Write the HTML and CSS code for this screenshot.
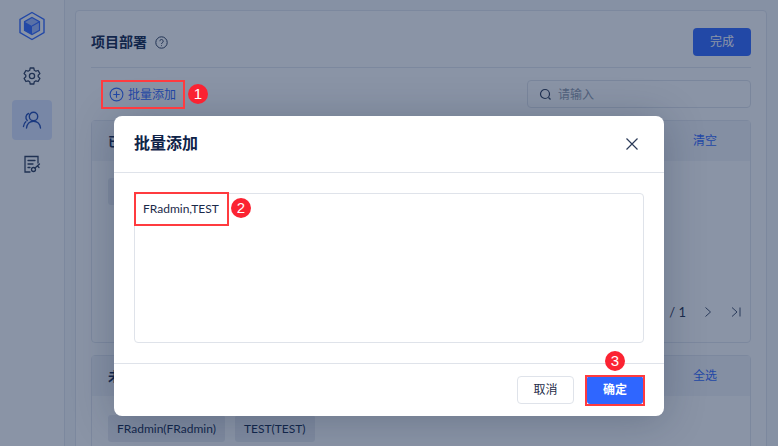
FILE: index.html
```html
<!DOCTYPE html>
<html lang="zh">
<head>
<meta charset="utf-8">
<title>项目部署</title>
<link rel="stylesheet" href="styles.css">
</head>
<body>
<div class="page">
  <aside class="sidebar">
    <div class="side-item">
      <svg width="32" height="32" viewBox="0 0 32 32" fill="none"><path d="M16 2.500 28 9.400v13.200L16 29.500 4 22.600V9.400z" stroke="#2f66ff" stroke-width="1.400"/><path d="M16 7.500 23.500 11.700v8.600L16 24.500 8.500 20.300v-8.600z" fill="#9db8ff" stroke="#2f66ff" stroke-width="1.200"/><path d="M8.500 11.700 16 15.900V24.500L8.500 20.300z" fill="#2f66ff"/><path d="M16 15.900 23.500 11.700" stroke="#2f66ff" stroke-width="1.200"/></svg>
    </div>
    <div class="side-item">
      <svg width="20" height="20" viewBox="0 0 20 20" fill="none" stroke="#2b3a58" stroke-width="1.300" stroke-linejoin="round"><path d="M8.200 2h3.600l.5 2.300 1.600.9 2.200-.7 1.800 3.100-1.700 1.600v1.600l1.700 1.600-1.800 3.100-2.200-.7-1.600.9-.5 2.300H8.200l-.5-2.300-1.600-.9-2.200.7-1.800-3.100 1.700-1.600V9.200L2.100 7.600l1.800-3.100 2.200.7 1.600-.9z"/><circle cx="10" cy="10" r="2.600"/></svg>
    </div>
    <div class="side-item side-active">
      <svg width="20" height="20" viewBox="0 0 20 20" fill="none" stroke="#1f48b0" stroke-width="1.400" stroke-linecap="round"><circle cx="11.500" cy="6.500" r="4.200"/><path d="M4.500 18c.4-4 3.300-6.800 7-6.800s6.600 2.800 7 6.800"/><path d="M6.500 3.500a4.200 4.200 0 0 0-1.300 6.900M1.500 16.500c.2-2 1-3.700 2.300-4.800"/></svg>
    </div>
    <div class="side-item">
      <svg width="20" height="20" viewBox="0 0 20 20" fill="none" stroke="#2b3a58" stroke-width="1.300" stroke-linecap="round"><path d="M8 18H3V2.500h13V9"/><path d="M6 6.500h7M6 10h5M6 13.500h2"/><circle cx="11.500" cy="15.500" r="2"/><path d="M13 14l4.500-4M15.500 12l1.500 1.500"/></svg>
    </div>
  </aside>
  <main class="main">
    <section class="card">
      <header class="card-head">
        <div class="card-title">
          <span>项目部署</span>
          <svg width="13" height="13" viewBox="0 0 13 13" fill="none" stroke="#2b3a58"><circle cx="6.500" cy="6.500" r="5.700"/><path d="M4.800 5.200a1.700 1.700 0 1 1 2.700 1.400c-.6.400-1 .7-1 1.400"/><path d="M6.500 9.300v.8"/></svg>
        </div>
        <button class="btn-done">完成</button>
      </header>
      <div class="tools">
        <div class="add-link">
          <svg width="15" height="15" viewBox="0 0 15 15" fill="none" stroke="#2f66ff" stroke-width="1.100"><circle cx="7.500" cy="7.500" r="6.400"/><path d="M4.300 7.500h6.400M7.500 4.300v6.400"/></svg>
          <span>批量添加</span>
        </div>
        <div class="search">
          <svg width="13" height="13" viewBox="0 0 13 13" fill="none" stroke="#2b3a58" stroke-width="1.200"><circle cx="6" cy="6" r="4.500"/><path d="m9.500 9.500 2 2"/></svg>
          <span>请输入</span>
        </div>
      </div>
      <div class="panel panel-top">
        <div class="panel-head"><b>已选</b><span class="panel-link">清空</span></div>
        <div class="panel-body">
          <div class="tags"><span class="tag tag-empty"></span></div>
          <div class="pager">
            <span class="pager-box"></span>
            <span>/ 1</span>
            <svg width="10" height="12" viewBox="0 0 10 12" fill="none" stroke="#3d4a66" class="pager-next"><path d="m2.500 1.500 5 4.500-5 4.500"/></svg>
            <svg width="12" height="12" viewBox="0 0 12 12" fill="none" stroke="#3d4a66" class="pager-last"><path d="m2 1.500 5 4.500-5 4.500M10 1.500v9"/></svg>
          </div>
        </div>
      </div>
      <div class="panel">
        <div class="panel-head"><b>未选</b><span class="panel-link">全选</span></div>
        <div class="panel-body">
          <div class="tags">
            <span class="tag">FRadmin(FRadmin)</span>
            <span class="tag">TEST(TEST)</span>
          </div>
        </div>
      </div>
    </section>
  </main>
</div>

<div class="overlay">
  <div class="dialog">
    <header class="dialog-head">
      <h2>批量添加</h2>
      <svg width="14" height="14" viewBox="0 0 14 14" fill="none" stroke="#2b3a58" stroke-width="1.200"><path d="m1.500 1.500 11 11M12.500 1.500l-11 11"/></svg>
    </header>
    <div class="dialog-body">
      <div class="input-area">FRadmin,TEST</div>
    </div>
    <footer class="dialog-foot">
      <button class="btn-cancel">取消</button>
      <button class="btn-ok">确定</button>
    </footer>
  </div>
</div>

<div class="mark mark-add"></div>
<div class="mark mark-input"></div>
<div class="mark mark-ok"></div>
<span class="badge badge-1">1</span>
<span class="badge badge-2">2</span>
<span class="badge badge-3">3</span>
</body>
</html>
```
FILE: styles.css
```css
* { box-sizing: border-box; }
html, body { margin: 0; height: 100%; overflow: hidden; }
body {
  position: relative;
  width: 778px;
  height: 446px;
  font-family: Lato, "Noto Sans CJK SC", sans-serif;
  font-size: 12px;
  line-height: 18px;
  color: #0f2348;
  background: #fff;
}
button { font: inherit; cursor: pointer; }
.page { display: flex; height: 446px; overflow: hidden; background: #f6f8fb; }
.sidebar {
  flex: 0 0 65px;
  background: #fff;
  border-right: 1px solid #e2e6ee;
  padding: 6px 12px 0;
  display: flex;
  flex-direction: column;
  gap: 4px;
}
.side-item { width: 40px; height: 40px; display: flex; align-items: center; justify-content: center; border-radius: 4px; }
.side-item:nth-child(2) { margin-top: 6px; }
.side-active { background: #dbe5ff; }
.main { flex: 1; padding: 10px 11px 0 10px; min-width: 0; }
.card {
  height: 480px;
  background: #fff;
  border: 1px solid #e2e6ee;
  border-radius: 4px;
  padding: 0 15px;
}
.card-head {
  height: 57px;
  display: flex;
  align-items: flex-end;
  justify-content: space-between;
  border-bottom: 1px solid #e2e6ee;
  padding-bottom: 11px;
}
.card-title { display: flex; align-items: center; gap: 8px; font-size: 14px; font-weight: 700; height: 28px; }
.btn-done { width: 58px; height: 28px; border: 0; border-radius: 4px; background: #2f66ff; color: #fff; }
.tools { display: flex; justify-content: space-between; padding: 12px 0 12px 10px; height: 52px; }
.add-link { display: flex; align-items: center; gap: 4px; height: 29px; padding-left: 8px; color: #2f66ff; }
.search {
  width: 224px;
  height: 28px;
  display: flex;
  align-items: center;
  gap: 6px;
  padding-left: 11px;
  border: 1px solid #dfe3ea;
  border-radius: 4px;
  color: #8e99ab;
}
.search span { margin-top: 2px; }
.panel { border: 1px solid #e2e6ee; border-radius: 4px; margin-bottom: 12px; }
.panel-top { height: 223px; }
.panel-head {
  height: 40px;
  display: flex;
  align-items: center;
  justify-content: space-between;
  padding: 0 33px 0 16px;
  background: #f2f4f8;
  font-size: 13px;
}
.panel-link { color: #2f66ff; font-size: 12px; }
.panel-body { position: relative; height: 180px; padding: 17px 16px; }
.panel-top .panel-body { display: flex; flex-direction: column; justify-content: space-between; padding: 17px 8px 16px 16px; }
.tags { display: flex; gap: 10px; }
.tag { height: 27px; padding: 0 9px; display: flex; align-items: center; background: #e8ebf1; border-radius: 3px; }
.panel:not(.panel-top) .panel-body { padding-top: 19px; }
.tag-empty { width: 96px; }
.pager { display: flex; align-items: center; justify-content: flex-end; height: 27px; font-size: 13px; color: #1f2c48; }
.pager-box { width: 36px; height: 27px; border: 1px solid #dfe3ea; border-radius: 3px; margin-right: 5px; }
.pager-next { margin-left: 17px; }
.pager-last { margin-left: 17px; }

.overlay {
  position: absolute;
  inset: 0;
  background: rgba(21, 41, 77, .5);
  padding: 116px 0 0 114px;
}
.dialog {
  width: 550px;
  height: 300px;
  background: #fff;
  border-radius: 8px;
  box-shadow: 0 4px 40px rgba(15, 30, 60, .25);
  display: flex;
  flex-direction: column;
}
.dialog-head {
  height: 57px;
  display: flex;
  align-items: center;
  justify-content: space-between;
  padding: 0 25px 0 20px;
  border-bottom: 1px solid #dfe3ea;
}
.dialog-head h2 { margin: 0 0 2px; font-size: 16px; line-height: 24px; font-weight: 700; color: #0f2348; }
.dialog-body { height: 191px; padding: 20px; border-bottom: 1px solid #dfe3ea; }
.input-area {
  height: 150px;
  padding: 6px 8px;
  border: 1px solid #dfe3ea;
  border-radius: 4px;
  color: #1b2a4a;
}
.dialog-foot { flex: 1; display: flex; justify-content: flex-end; align-items: flex-start; gap: 13px; padding: 12px 21px 0; }
.btn-cancel { width: 57px; height: 28px; background: #fff; border: 1px solid #dfe3ea; border-radius: 4px; color: #1f2c48; }
.btn-ok { width: 56px; height: 28px; background: #2f66ff; border: 0; border-radius: 3px; color: #fff; font-weight: 700; }

.mark { position: absolute; border: 2px solid #ff3b3f; }
.mark-add { left: 101px; top: 80px; width: 84px; height: 29px; }
.mark-input { left: 134px; top: 192px; width: 95px; height: 34px; }
.mark-ok { left: 585px; top: 375px; width: 60px; height: 31px; }
.badge {
  position: absolute;
  width: 20px;
  height: 20px;
  border-radius: 50%;
  background: #fb2332;
  color: #fff;
  font-family: "Liberation Sans", sans-serif;
  font-size: 15px;
  line-height: 20px;
  text-align: center;
}
.badge-1 { left: 188px; top: 84px; }
.badge-2 { left: 231px; top: 198px; }
.badge-3 { left: 605px; top: 351px; }
```
